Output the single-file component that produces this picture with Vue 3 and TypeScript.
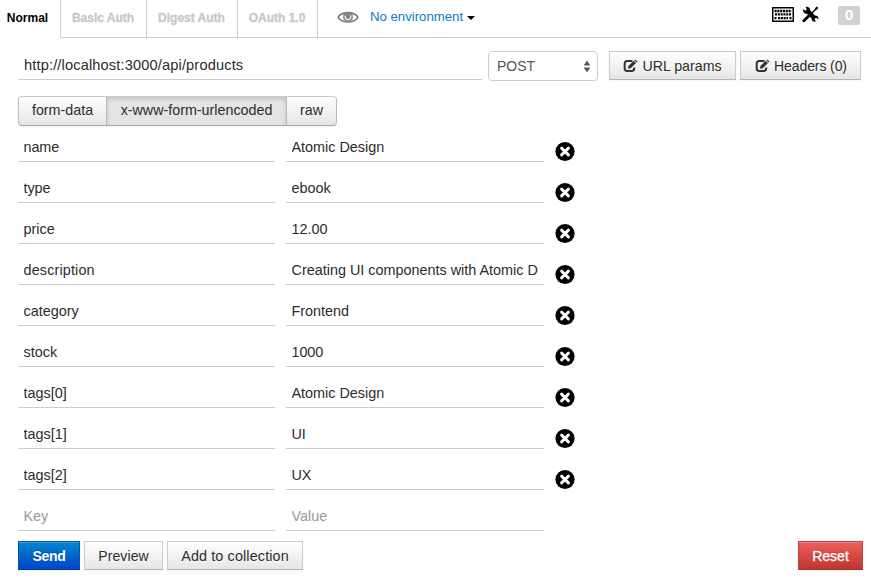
<script setup lang="ts">
import { ref } from 'vue'

interface Tab { label: string; cls: string }
interface Param { key: string; value: string; kc: string; vc: string }

const tabs: Tab[] = [
  { label: 'Normal', cls: 'tab-normal' },
  { label: 'Basic Auth', cls: 'tab-basic' },
  { label: 'Digest Auth', cls: 'tab-digest' },
  { label: 'OAuth 1.0', cls: 'tab-oauth' },
]
const activeTab = ref('Normal')

const url = ref('http://localhost:3000/api/products')
const method = ref('POST')
const methods: string[] = ['GET', 'POST', 'PUT', 'PATCH', 'DELETE']

const bodyTypes: { label: string; cls: string }[] = [
  { label: 'form-data', cls: 'type-form' },
  { label: 'x-www-form-urlencoded', cls: 'type-url' },
  { label: 'raw', cls: 'type-raw' },
]
const bodyType = ref('x-www-form-urlencoded')

const initial: Param[] = [
  { key: 'name', value: 'Atomic Design', kc: 't1', vc: 't2' },
  { key: 'type', value: 'ebook', kc: 't1', vc: 't2' },
  { key: 'price', value: '12.00', kc: 't2', vc: 't2' },
  { key: 'description', value: 'Creating UI components with Atomic Design', kc: 't3', vc: 't2' },
  { key: 'category', value: 'Frontend', kc: 't2', vc: 't2' },
  { key: 'stock', value: '1000', kc: 't2', vc: 't1' },
  { key: 'tags[0]', value: 'Atomic Design', kc: 't2', vc: 't2' },
  { key: 'tags[1]', value: 'UI', kc: 't2', vc: 't1' },
  { key: 'tags[2]', value: 'UX', kc: 't2', vc: 't1' },
]
const params = ref<Param[]>(initial.map((p) => ({ ...p })))

function remove(index: number) {
  params.value.splice(index, 1)
}
function reset() {
  params.value = initial.map((p) => ({ ...p }))
}
</script>

<template>
  <div class="page">
    <header class="top">
      <nav class="tabs">
        <button
          v-for="t in tabs"
          :key="t.label"
          class="tab"
          :class="[t.cls, { active: t.label === activeTab }]"
          @click="activeTab = t.label"
        >{{ t.label }}</button>
      </nav>
      <div class="tools">
        <svg class="eye" width="22" height="14" viewBox="0 0 22 14">
          <path d="M1 7.3C5 1 17 1 21 7.3C17 13.6 5 13.6 1 7.3Z" fill="#fff" stroke="#858585" stroke-width="1.6" />
          <path d="M0.6 7C5 .2 17 .2 21.4 7C18.5 5 16.5 4.6 15.3 4.6H6.7C5.5 4.6 3.5 5 .6 7Z" fill="#858585" />
          <circle cx="11" cy="6.9" r="4.9" fill="#858585" />
          <path d="M8.3 5.6A2.9 2.9 0 1 0 13.4 5.2" fill="none" stroke="#fff" stroke-width="1.1" />
        </svg>
        <a class="environment">No environment<i class="caret"></i></a>
        <svg class="keyboard" width="22" height="16" viewBox="0 0 22 16">
          <rect x="0" y="0" width="22" height="15" rx="0.5" fill="#000" />
          <rect x="1.5" y="1.5" width="19" height="12" fill="#fff" />
          <path d="M2.5 4H19.5M3 7.4H19.5M2.5 11.2H4.5M6 11.2H16M17.5 11.2H19.5" fill="none" stroke="#000" stroke-width="2.3" stroke-dasharray="2.1 .7" />
        </svg>
        <svg class="wrench" width="17" height="17" viewBox="0 0 17 17">
          <path d="M1.9 14.7L8 8.7" stroke="#000" stroke-width="2.9" stroke-linecap="round" />
          <path d="M9 8L15 2" stroke="#000" stroke-width="1.5" />
          <path d="M12.9 2.3L14.8.6L16.3 2.1L14.7 4.1Z" fill="#000" />
          <path d="M.8 3L3.4 4.7L4.8 3.5L3.6.9Q7.9.4 8.3 4.6L12.9 9.4Q16.8 9.4 16.5 13.3L14.1 11.8L12.5 13L13.8 15.8Q9.6 16.2 9.6 12.6L4.8 7.7Q1 7.9.8 3Z" fill="#000" />
        </svg>
        <span class="count">0</span>
      </div>
    </header>

    <main class="content">
      <section class="request">
        <input v-model="url" class="field url" spellcheck="false" />
        <div class="method">
          <select v-model="method">
            <option v-for="m in methods" :key="m">{{ m }}</option>
          </select>
          <svg class="arrows" width="8" height="13" viewBox="0 0 8 13">
            <path d="M4 0.4L7.3 5.4H.7ZM4 12.6L7.3 7.6H.7Z" fill="#555" />
          </svg>
        </div>
        <button class="btn params-btn">
          <svg class="edit" width="15" height="14" viewBox="0 0 15 14">
            <path d="M9.4 2H4.2Q1.7 2 1.7 4.5V9.6Q1.7 12 4.2 12H8.7Q11.2 12 11.2 9.6V8.5" fill="none" stroke="#333" stroke-width="2" />
            <path d="M4.9 9.7L5.4 6.9L10.7 1.8L13 4.1L7.7 9.2ZM11.4 1.2L12.2.4L14.5 2.6L13.7 3.4Z" fill="#333" />
          </svg>
          <span>URL params</span>
        </button>
        <button class="btn headers-btn">
          <svg class="edit" width="15" height="14" viewBox="0 0 15 14">
            <path d="M9.4 2H4.2Q1.7 2 1.7 4.5V9.6Q1.7 12 4.2 12H8.7Q11.2 12 11.2 9.6V8.5" fill="none" stroke="#333" stroke-width="2" />
            <path d="M4.9 9.7L5.4 6.9L10.7 1.8L13 4.1L7.7 9.2ZM11.4 1.2L12.2.4L14.5 2.6L13.7 3.4Z" fill="#333" />
          </svg>
          <span>Headers (0)</span>
        </button>
      </section>

      <div class="body-types">
        <button
          v-for="b in bodyTypes"
          :key="b.label"
          class="type"
          :class="[b.cls, { active: b.label === bodyType }]"
          @click="bodyType = b.label"
        >{{ b.label }}</button>
      </div>

      <section class="rows">
        <div v-for="(p, i) in params" :key="i" class="row">
          <input v-model="p.key" class="field key" :class="p.kc" spellcheck="false" />
          <input v-model="p.value" class="field value" :class="p.vc" spellcheck="false" />
          <button class="remove" aria-label="Remove" @click="remove(i)">
            <svg width="20" height="20" viewBox="0 0 20 20">
              <circle cx="10" cy="9.5" r="9.6" fill="#000" />
              <path d="M6.6 6.1L13.4 12.9M13.4 6.1L6.6 12.9" stroke="#fff" stroke-width="2.9" stroke-linecap="round" />
            </svg>
          </button>
        </div>
        <div class="row last">
          <input class="field key" placeholder="Key" />
          <input class="field value" placeholder="Value" />
        </div>
      </section>

      <footer class="actions">
        <button class="btn send">Send</button>
        <button class="btn preview">Preview</button>
        <button class="btn add">Add to collection</button>
        <button class="btn reset" @click="reset">Reset</button>
      </footer>
    </main>
  </div>
</template>

<style>
body {
  margin: 0;
  background: #fff;
  overflow: hidden;
}
</style>

<style scoped>
.page {
  width: 871px;
  height: 587px;
  font-family: "Liberation Sans", Arial, sans-serif;
  font-size: 14px;
  color: #2c2c2c;
}
.page *,
.page *::before {
  box-sizing: border-box;
}
button, input, select {
  font: inherit;
  color: inherit;
  margin: 0;
  outline: none;
}
.top {
  display: flex;
  height: 38px;
}
.tabs {
  display: flex;
}
.tab {
  height: 38px;
  padding: 0 1px 2px 0;
  background: #fff;
  border: 0 solid #ccc;
  border-right-width: 1px;
  border-bottom-width: 1px;
  font-size: 12px;
  font-weight: bold;
  color: #c8c8c8;
  -webkit-text-stroke: 0.3px #c8c8c8;
}
.tab.active {
  color: #000;
  border-bottom-color: #fff;
  -webkit-text-stroke: 0;
}
.tab-normal { width: 61px; padding-right: 5px; }
.tab-basic { width: 86px; }
.tab-digest { width: 91px; }
.tab-oauth { width: 80px; }
.tools {
  flex: 1;
  display: flex;
  align-items: flex-start;
  border-bottom: 1px solid #ccc;
  padding: 0 11px 0 19px;
}
.eye {
  margin-top: 10px;
}
.environment {
  display: flex;
  margin: 8px auto 0 11px;
  line-height: 18px;
  font-size: 13.2px;
  color: #0b7cc4;
}
.caret {
  width: 0;
  margin: 8px 0 0 4px;
  height: 0;
  border: 4px solid transparent;
  border-top-color: #000;
  border-bottom: 0;
}
.keyboard {
  margin: 7px 8px 0 0;
}
.wrench {
  margin: 6px 19px 0 0;
}
.count {
  width: 22px;
  height: 19px;
  margin-top: 6px;
  border-radius: 2px;
  background: #d2d2d2;
  color: #fff;
  font-weight: bold;
  font-size: 15.5px;
  line-height: 18px;
  text-align: center;
}
.content {
  padding: 13px 8px 0 18px;
}
.request {
  display: flex;
  align-items: flex-start;
  height: 45px;
}
.field {
  display: block;
  height: 29px;
  padding: 0 6px 0 5.5px;
  border: 0;
  border-bottom: 1px solid #ccc;
  border-radius: 0;
  background: transparent;
  font-size: 14.4px;
}
.field::placeholder {
  color: #999;
  opacity: 1;
}
.url {
  width: 464px;
  margin-right: 6px;
  padding-left: 6px;
  font-size: 14.6px;
  letter-spacing: 0.15px;
}
.method {
  position: relative;
  width: 110px;
  height: 30px;
  margin-right: 11px;
}
.method select {
  appearance: none;
  width: 110px;
  height: 30px;
  padding: 0 20px 0 8px;
  border: 1px solid #ccc;
  border-radius: 4px;
  background: #fff;
  color: #555;
}
.arrows {
  position: absolute;
  right: 7px;
  top: 9px;
  pointer-events: none;
}
.btn {
  display: flex;
  align-items: center;
  justify-content: center;
  height: 29px;
  padding: 0;
  border: 1px solid #ccc;
  border-bottom-color: #b3b3b3;
  background: linear-gradient(#fff, #e6e6e6);
  box-shadow: inset 0 1px 0 rgba(255, 255, 255, 0.2), 0 1px 2px rgba(0, 0, 0, 0.05);
  text-shadow: 0 1px 1px rgba(255, 255, 255, 0.75);
  white-space: nowrap;
}
.edit {
  margin-right: 4px;
}
.params-btn {
  width: 127px;
  margin-right: 4px;
  font-size: 14.2px;
}
.headers-btn {
  width: 121px;
  padding-left: 1px;
  letter-spacing: -0.1px;
}
.body-types {
  display: flex;
  height: 30px;
}
.type {
  height: 30px;
  padding: 0 0 2px;
  border: 1px solid #bbb;
  border-top-color: #ccc;
  border-bottom-color: #a8a8a8;
  border-left-width: 0;
  background: linear-gradient(#fff, #e6e6e6);
  box-shadow: 0 1px 2px rgba(0, 0, 0, 0.05);
  font-size: 14.3px;
}
.type.active {
  background: #e4e4e4;
  box-shadow: inset 0 2px 4px rgba(0, 0, 0, 0.15), 0 1px 2px rgba(0, 0, 0, 0.05);
}
.type-form {
  width: 89px;
  border-left-width: 1px;
  border-radius: 4px 0 0 4px;
}
.type-url { width: 180px; }
.type-raw {
  width: 50px;
  border-radius: 0 4px 4px 0;
}
.rows {
  padding-top: 7px;
}
.row {
  display: flex;
  align-items: flex-start;
  height: 41px;
}
.row.last {
  height: 39px;
}
.key {
  width: 257px;
  margin-right: 11px;
}
.value {
  width: 258px;
  margin-right: 11px;
}
.t1 { letter-spacing: -0.1px; }
.t2 { letter-spacing: 0; }
.t3 { letter-spacing: 0.15px; }
.remove {
  display: block;
  width: 20px;
  height: 20px;
  margin-top: 9px;
  padding: 0;
  border: 0;
  background: none;
}
.remove svg {
  display: block;
  overflow: visible;
}
.actions {
  display: flex;
  gap: 4px;
}
.send {
  width: 62px;
  border-color: #0055b3 #0055b3 #003d99;
  background: linear-gradient(#0088cc, #0044cc);
  color: #fff;
  font-weight: bold;
  text-shadow: 0 -1px 0 rgba(0, 0, 0, 0.25);
  letter-spacing: -0.3px;
}
.preview {
  width: 79px;
  letter-spacing: 0.1px;
}
.add {
  width: 136px;
  font-size: 14.4px;
  letter-spacing: 0.12px;
}
.reset {
  width: 65px;
  margin-left: auto;
  border-color: #c5433d #c5433d #a9302b;
  background: linear-gradient(#ee5f5b, #bd362f);
  color: #fff;
  text-shadow: 0 -1px 0 rgba(0, 0, 0, 0.25);
  -webkit-text-stroke: 0.3px #fff;
}
</style>
